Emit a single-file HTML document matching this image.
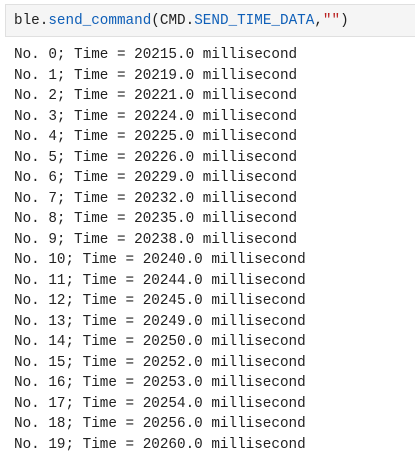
<!DOCTYPE html>
<html><head><style>
html,body{margin:0;padding:0;background:#fff;width:415px;height:465px;overflow:hidden}
.code{position:absolute;left:5px;top:4px;width:412px;height:33px;background:#f5f5f5;border:1px solid #e0e0e0;box-sizing:border-box}
.code pre{margin:0;position:absolute;left:8px;top:8px}
pre{font-family:"Liberation Mono",monospace;font-size:14.3px;color:#212121}
.b{color:#0f5fb8}.s{color:#ba2121}
.out{position:absolute;left:14px;top:45px;margin:0;line-height:20.5px}
</style></head><body>
<div class="code"><pre>ble.<span class="b">send_command</span>(CMD.<span class="b">SEND_TIME_DATA</span>,<span class="s">""</span>)</pre></div>
<pre class="out">No. 0; Time = 20215.0 millisecond
No. 1; Time = 20219.0 millisecond
No. 2; Time = 20221.0 millisecond
No. 3; Time = 20224.0 millisecond
No. 4; Time = 20225.0 millisecond
No. 5; Time = 20226.0 millisecond
No. 6; Time = 20229.0 millisecond
No. 7; Time = 20232.0 millisecond
No. 8; Time = 20235.0 millisecond
No. 9; Time = 20238.0 millisecond
No. 10; Time = 20240.0 millisecond
No. 11; Time = 20244.0 millisecond
No. 12; Time = 20245.0 millisecond
No. 13; Time = 20249.0 millisecond
No. 14; Time = 20250.0 millisecond
No. 15; Time = 20252.0 millisecond
No. 16; Time = 20253.0 millisecond
No. 17; Time = 20254.0 millisecond
No. 18; Time = 20256.0 millisecond
No. 19; Time = 20260.0 millisecond</pre>
</body></html>
